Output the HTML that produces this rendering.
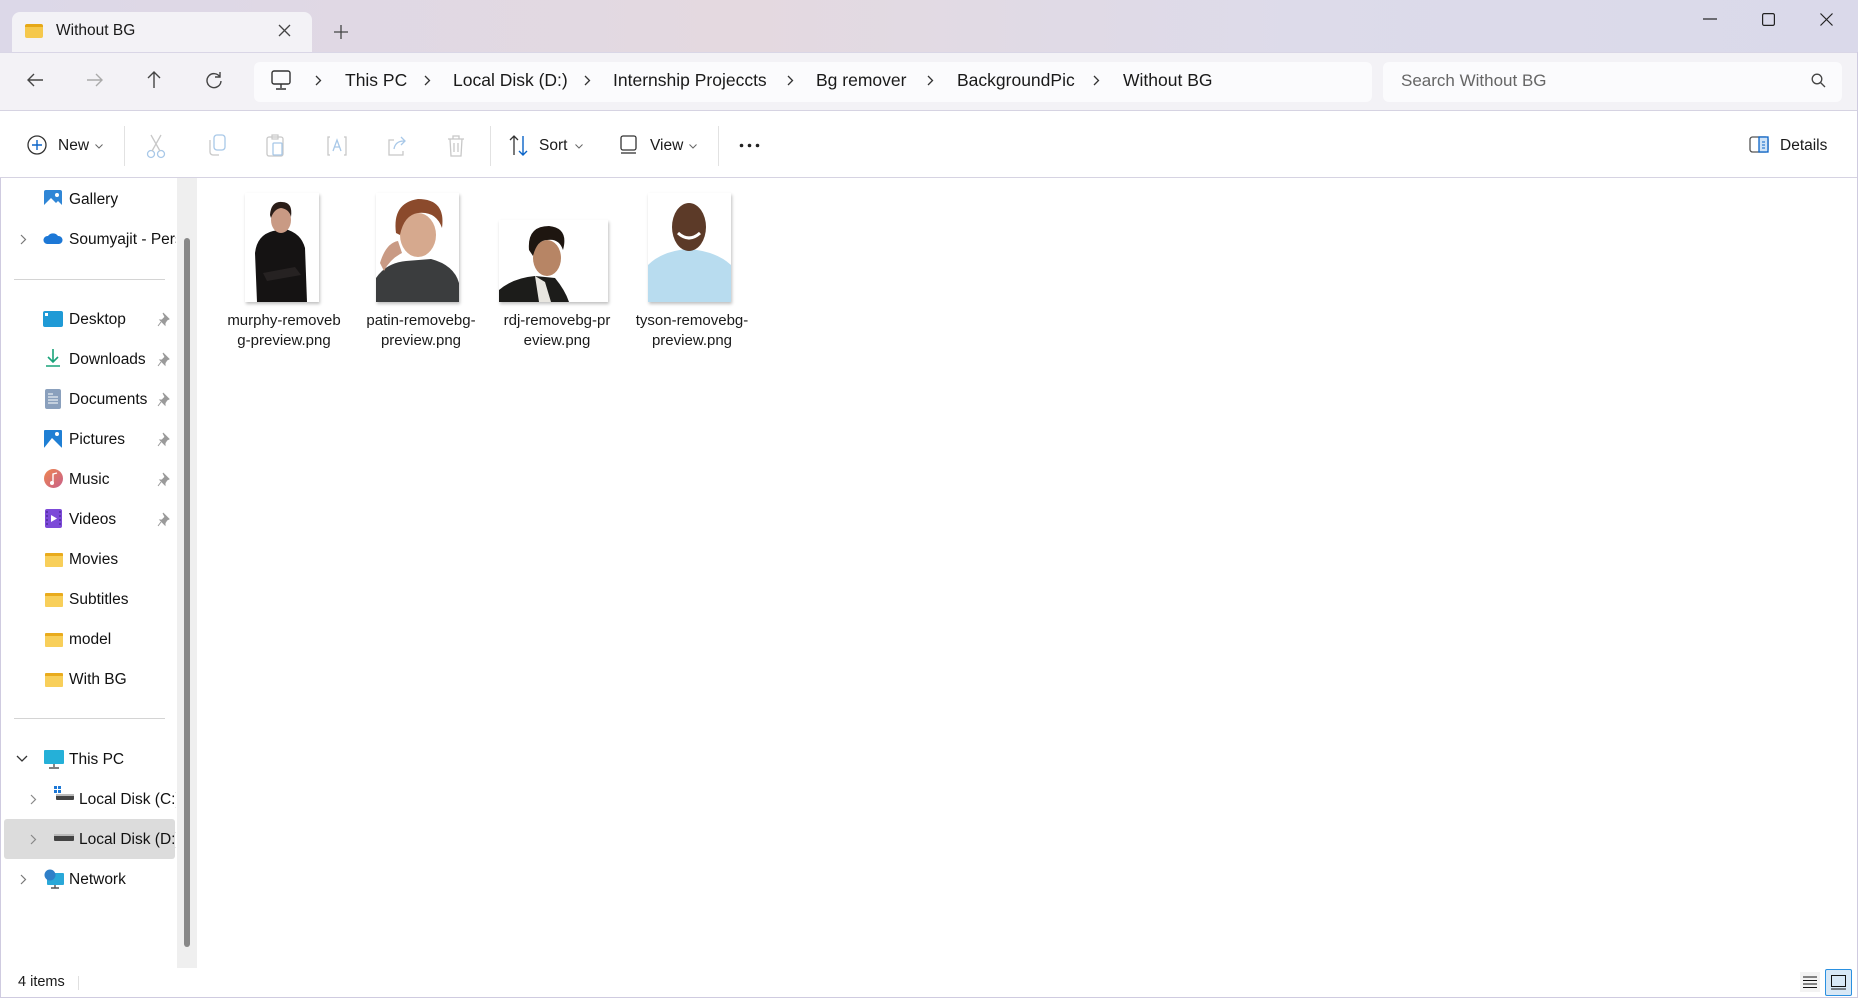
<!DOCTYPE html>
<html><head><meta charset="utf-8"><style>
*{margin:0;padding:0;box-sizing:border-box}
body{width:1858px;height:998px;overflow:hidden;font-family:"Segoe UI","Liberation Sans",sans-serif;color:#1a1a1a;background:#fff;position:relative}
.a{position:absolute}
.t{position:absolute;white-space:nowrap}
.title{left:0;top:0;width:1858px;height:52px;background:linear-gradient(90deg,#dcd8e8 0%,#e4d9e0 40%,#dddbea 70%,#dad9ea 100%)}
.addr{left:0;top:52px;width:1858px;height:58px;background:#f3f2f6;border-top:1px solid #d9d6e6}
.tb{left:0;top:110px;width:1858px;height:68px;background:#fff;border-top:1px solid #d6d3e2;border-bottom:1px solid #d6d3e2}
.side .t{font-size:15.5px;color:#111}
.lbl{position:absolute;width:140px;text-align:center;font-size:15px;line-height:20px;color:#1a1a1a}
.bc{font-size:17.5px;color:#1a1a1a}
.ch{font-size:15px}
</style></head><body>
<div class="a title"></div>
<div class="a" style="left:12px;top:12px;width:300px;height:41px;background:#f3f2f6;border-radius:8px 8px 0 0"></div>
<div class="a" style="left:25px;top:24px;width:18px;height:14px;background:#f5c84c;border-radius:2px;border-top:3px solid #e6a817"></div>
<div class="t" style="left:56px;top:22px;font-size:15.5px">Without BG</div>
<svg class="a" style="left:278px;top:24px" width="13" height="13"><path d="M1 1L12 12M12 1L1 12" stroke="#444" stroke-width="1.3"/></svg>
<svg class="a" style="left:334px;top:25px" width="14" height="14"><path d="M7 0V14M0 7H14" stroke="#444" stroke-width="1.3"/></svg>
<svg class="a" style="left:1703px;top:18px" width="14" height="2"><path d="M0 1H14" stroke="#222" stroke-width="1.2"/></svg>
<svg class="a" style="left:1762px;top:13px" width="13" height="13"><rect x="0.6" y="0.6" width="11.8" height="11.8" rx="1.5" fill="none" stroke="#222" stroke-width="1.2"/></svg>
<svg class="a" style="left:1820px;top:13px" width="13" height="13"><path d="M0.5 0.5L12.5 12.5M12.5 0.5L0.5 12.5" stroke="#222" stroke-width="1.2"/></svg>

<div class="a addr"></div>
<svg class="a" style="left:26px;top:71px" width="18" height="18"><path d="M17 9H2M8 3L2 9L8 15" fill="none" stroke="#444" stroke-width="1.4"/></svg>
<svg class="a" style="left:86px;top:71px" width="18" height="18"><path d="M1 9H16M10 3L16 9L10 15" fill="none" stroke="#aaa" stroke-width="1.4"/></svg>
<svg class="a" style="left:145px;top:70px" width="18" height="19"><path d="M9 18V2M3 8L9 2L15 8" fill="none" stroke="#444" stroke-width="1.4"/></svg>
<svg class="a" style="left:205px;top:71px" width="18" height="18"><path d="M15 6A7 7 0 1 0 16 10M15 1V6H10" fill="none" stroke="#444" stroke-width="1.4"/></svg>
<div class="a" style="left:254px;top:62px;width:1118px;height:40px;background:#fbfbfd;border-radius:6px"></div>
<svg class="a" style="left:271px;top:70px" width="20" height="22"><rect x="1" y="1" width="18" height="13" rx="2" fill="none" stroke="#333" stroke-width="1.4"/><path d="M10 14V18M5 19H15" stroke="#333" stroke-width="1.4"/></svg>
<div class="bc">
<svg class="a" style="left:315px;top:75px" width="7" height="11"><path d="M1 1L5.5 5.5L1 10" fill="none" stroke="#333" stroke-width="1.3"/></svg>
<div class="t" style="left:345px;top:70px">This PC</div>
<svg class="a" style="left:424px;top:75px" width="7" height="11"><path d="M1 1L5.5 5.5L1 10" fill="none" stroke="#333" stroke-width="1.3"/></svg>
<div class="t" style="left:453px;top:70px">Local Disk (D:)</div>
<svg class="a" style="left:584px;top:75px" width="7" height="11"><path d="M1 1L5.5 5.5L1 10" fill="none" stroke="#333" stroke-width="1.3"/></svg>
<div class="t" style="left:613px;top:70px">Internship Projeccts</div>
<svg class="a" style="left:787px;top:75px" width="7" height="11"><path d="M1 1L5.5 5.5L1 10" fill="none" stroke="#333" stroke-width="1.3"/></svg>
<div class="t" style="left:816px;top:70px">Bg remover</div>
<svg class="a" style="left:927px;top:75px" width="7" height="11"><path d="M1 1L5.5 5.5L1 10" fill="none" stroke="#333" stroke-width="1.3"/></svg>
<div class="t" style="left:957px;top:70px">BackgroundPic</div>
<svg class="a" style="left:1093px;top:75px" width="7" height="11"><path d="M1 1L5.5 5.5L1 10" fill="none" stroke="#333" stroke-width="1.3"/></svg>
<div class="t" style="left:1123px;top:70px">Without BG</div>
</div>
<div class="a" style="left:1383px;top:62px;width:459px;height:40px;background:#fbfbfd;border-radius:6px"></div>
<div class="t" style="left:1401px;top:71px;font-size:17px;color:#666">Search Without BG</div>
<svg class="a" style="left:1811px;top:73px" width="15" height="15"><circle cx="6" cy="6" r="4.8" fill="none" stroke="#444" stroke-width="1.3"/><path d="M9.5 9.5L14 14" stroke="#444" stroke-width="1.3"/></svg>

<div class="a tb"></div>
<svg class="a" style="left:27px;top:135px" width="20" height="20"><circle cx="10" cy="10" r="9" fill="none" stroke="#333" stroke-width="1.3"/><path d="M10 5V15M5 10H15" stroke="#0a64c8" stroke-width="1.4"/></svg>
<div class="t" style="left:58px;top:137px;font-size:15.5px">New</div>
<svg class="a" style="left:95px;top:144px" width="8" height="5"><path d="M0.5 0.5L4 4L7.5 0.5" fill="none" stroke="#666"/></svg>
<div class="a" style="left:124px;top:126px;width:1px;height:40px;background:#e2e2e2"></div>
<svg class="a" style="left:146px;top:133px" width="20" height="26"><circle cx="5" cy="21" r="3.5" fill="none" stroke="#a8c8e8" stroke-width="1.3"/><circle cx="15" cy="21" r="3.5" fill="none" stroke="#a8c8e8" stroke-width="1.3"/><path d="M6 18L15 2M14 18L5 2" stroke="#c8c8c8" stroke-width="1.3"/></svg>
<svg class="a" style="left:207px;top:134px" width="20" height="24"><rect x="7" y="1" width="11" height="15" rx="3" fill="none" stroke="#a8c8e8" stroke-width="1.3"/><path d="M3 6V18a3 3 0 0 0 3 3H12" fill="none" stroke="#c8c8c8" stroke-width="1.3"/></svg>
<svg class="a" style="left:266px;top:134px" width="20" height="24"><rect x="1" y="3" width="16" height="19" rx="2" fill="none" stroke="#c8c8c8" stroke-width="1.3"/><rect x="6" y="1" width="6" height="4" fill="none" stroke="#c8c8c8" stroke-width="1.2"/><rect x="7" y="9" width="9" height="12" rx="1" fill="none" stroke="#a8c8e8" stroke-width="1.3"/></svg>
<svg class="a" style="left:326px;top:134px" width="22" height="24"><path d="M4 3H2V21H4M18 3H20V21H18" fill="none" stroke="#c8c8c8" stroke-width="1.3"/><path d="M7 17L11 6L15 17M8.5 13H13.5" fill="none" stroke="#a8c8e8" stroke-width="1.3"/></svg>
<svg class="a" style="left:386px;top:134px" width="22" height="24"><path d="M8 6H3V21H17V17" fill="none" stroke="#c8c8c8" stroke-width="1.3"/><path d="M8 15C9 9 13 7 18 7M15 3L19 7L15 11" fill="none" stroke="#a8c8e8" stroke-width="1.3"/></svg>
<svg class="a" style="left:446px;top:134px" width="20" height="24"><path d="M2 5H18M7 5V2H13V5M4 5L5 22H15L16 5M8 9V18M12 9V18" fill="none" stroke="#c8c8c8" stroke-width="1.3"/></svg>
<div class="a" style="left:490px;top:126px;width:1px;height:40px;background:#e2e2e2"></div>
<svg class="a" style="left:508px;top:134px" width="22" height="24"><path d="M6 21V2M2 6L6 2L10 6" fill="none" stroke="#333" stroke-width="1.3"/><path d="M15 2V21M11 17L15 21L19 17" fill="none" stroke="#0a64c8" stroke-width="1.4"/></svg>
<div class="t" style="left:539px;top:137px;font-size:15.5px">Sort</div>
<svg class="a" style="left:575px;top:144px" width="8" height="5"><path d="M0.5 0.5L4 4L7.5 0.5" fill="none" stroke="#666"/></svg>
<svg class="a" style="left:619px;top:135px" width="20" height="20"><rect x="2" y="1" width="15" height="14" rx="2" fill="none" stroke="#333" stroke-width="1.3"/><path d="M2 18H17" stroke="#333" stroke-width="1.3"/></svg>
<div class="t" style="left:650px;top:137px;font-size:15.5px">View</div>
<svg class="a" style="left:689px;top:144px" width="8" height="5"><path d="M0.5 0.5L4 4L7.5 0.5" fill="none" stroke="#666"/></svg>
<div class="a" style="left:718px;top:126px;width:1px;height:40px;background:#e2e2e2"></div>
<svg class="a" style="left:739px;top:143px" width="22" height="5"><circle cx="2.5" cy="2.5" r="1.8" fill="#222"/><circle cx="10.5" cy="2.5" r="1.8" fill="#222"/><circle cx="18.5" cy="2.5" r="1.8" fill="#222"/></svg>
<svg class="a" style="left:1749px;top:136px" width="20" height="18"><rect x="1" y="1" width="18" height="15" rx="2.5" fill="none" stroke="#555" stroke-width="1.3"/><rect x="10" y="1" width="9" height="15" fill="#cfe3f7" stroke="#0a64c8" stroke-width="1.3"/><path d="M13 6H16M13 9H16M13 12H16" stroke="#0a64c8"/></svg>
<div class="t" style="left:1780px;top:137px;font-size:15.5px">Details</div>

<div class="a" style="left:0;top:178px;width:1px;height:820px;background:#cfcbe0"></div>
<div class="a" style="right:0;top:52px;width:1px;height:946px;background:#cfcbe0"></div>
<div class="a" style="left:0;bottom:0;width:1858px;height:1px;background:#cfcbe0"></div>

<div class="a" style="left:177px;top:178px;width:20px;height:790px;background:#efefef"></div>
<div class="a" style="left:184px;top:238px;width:6px;height:709px;background:#888;border-radius:3px"></div>
<div class="a" style="left:4px;top:819px;width:171px;height:40px;background:#dcdcdc;border-radius:3px"></div>
<div class="side" style="position:absolute;left:0;top:0;width:176px;height:998px;overflow:hidden">
<svg class="a" style="left:43px;top:189px" width="20" height="20"><rect x="1" y="1" width="18" height="17" rx="2" fill="#2f86d6"/><path d="M1 16L8 9L13 14L15 12L19 16V18H1Z" fill="#fff"/><circle cx="14" cy="6" r="2" fill="#fff"/></svg>
<div class="t" style="left:69px;top:191px">Gallery</div>
<svg class="a" style="left:20px;top:234px" width="7" height="11"><path d="M1 1L5.5 5.5L1 10" fill="none" stroke="#777" stroke-width="1.2"/></svg>
<svg class="a" style="left:43px;top:231px" width="20" height="14"><path d="M4 13A4 4 0 0 1 5 5A6 6 0 0 1 15 5A4 4 0 0 1 16 13Z" fill="#1d78d6"/></svg>
<div class="t" style="left:69px;top:231px">Soumyajit - Pers</div>
<div class="a" style="left:14px;top:279px;width:151px;height:1px;background:#d4d4d4"></div>
<svg class="a" style="left:43px;top:311px" width="20" height="16"><rect x="0" y="0" width="20" height="16" rx="2" fill="#1f9ad6"/><rect x="2" y="2" width="3" height="3" fill="#fff"/></svg>
<div class="t" style="left:69px;top:311px">Desktop</div>
<svg class="a" style="left:45px;top:348px" width="16" height="20"><path d="M8 1V14M3 9L8 14L13 9M1 18H15" fill="none" stroke="#1aa37a" stroke-width="1.6"/></svg>
<div class="t" style="left:69px;top:351px">Downloads</div>
<svg class="a" style="left:45px;top:389px" width="16" height="20"><rect x="0" y="0" width="16" height="20" rx="2" fill="#8aa0bd"/><path d="M3 5H8M3 8H13M3 11H13M3 14H13" stroke="#fff"/></svg>
<div class="t" style="left:69px;top:391px">Documents</div>
<svg class="a" style="left:43px;top:429px" width="20" height="20"><rect x="1" y="1" width="18" height="18" rx="1" fill="#1f7fd4"/><path d="M1 19L9 9L19 19Z" fill="#fff"/><circle cx="14" cy="5" r="2" fill="#fff"/></svg>
<div class="t" style="left:69px;top:431px">Pictures</div>
<div class="a" style="left:44px;top:469px;width:19px;height:19px;border-radius:50%;background:linear-gradient(135deg,#ee8650,#c8608a)"></div>
<svg class="a" style="left:49px;top:472px" width="10" height="13"><path d="M4 11V2L8 1" fill="none" stroke="#fff" stroke-width="1.4"/><circle cx="3" cy="11" r="2" fill="#fff"/></svg>
<div class="t" style="left:69px;top:471px">Music</div>
<svg class="a" style="left:45px;top:509px" width="17" height="19"><rect x="0" y="0" width="17" height="19" rx="2" fill="#7c4ad8"/><path d="M6 6L12 9.5L6 13Z" fill="#fff"/><path d="M2 2V17M15 2V17" stroke="#3a1e80" stroke-dasharray="2 2"/></svg>
<div class="t" style="left:69px;top:511px">Videos</div>
<div class="t" style="left:69px;top:551px">Movies</div>
<div class="t" style="left:69px;top:591px">Subtitles</div>
<div class="t" style="left:69px;top:631px">model</div>
<div class="t" style="left:69px;top:671px">With BG</div>
<div class="a" style="left:45px;top:553px;width:18px;height:14px;background:#f8cf5a;border-top:3px solid #e9ab1d;border-radius:1px"></div>
<div class="a" style="left:45px;top:593px;width:18px;height:14px;background:#f8cf5a;border-top:3px solid #e9ab1d;border-radius:1px"></div>
<div class="a" style="left:45px;top:633px;width:18px;height:14px;background:#f8cf5a;border-top:3px solid #e9ab1d;border-radius:1px"></div>
<div class="a" style="left:45px;top:673px;width:18px;height:14px;background:#f8cf5a;border-top:3px solid #e9ab1d;border-radius:1px"></div>
<div class="a" style="left:14px;top:718px;width:151px;height:1px;background:#d4d4d4"></div>
<svg class="a" style="left:16px;top:755px" width="12" height="8"><path d="M1 1L6 6L11 1" fill="none" stroke="#333" stroke-width="1.3"/></svg>
<svg class="a" style="left:44px;top:750px" width="20" height="19"><rect x="0" y="0" width="20" height="14" rx="1" fill="#25b0d8"/><path d="M10 14V17M5 18H15" stroke="#555" stroke-width="1.4"/></svg>
<div class="t" style="left:69px;top:751px">This PC</div>
<svg class="a" style="left:30px;top:794px" width="7" height="11"><path d="M1 1L5.5 5.5L1 10" fill="none" stroke="#888" stroke-width="1.2"/></svg>
<svg class="a" style="left:54px;top:786px" width="20" height="16"><rect x="0" y="0" width="3" height="3" fill="#1d78d6"/><rect x="4" y="0" width="3" height="3" fill="#1d78d6"/><rect x="0" y="4" width="3" height="3" fill="#1d78d6"/><rect x="4" y="4" width="3" height="3" fill="#1d78d6"/><rect x="2" y="8" width="18" height="6" rx="1" fill="#444"/><rect x="2" y="8" width="18" height="2" fill="#bbb"/></svg>
<div class="t" style="left:79px;top:791px">Local Disk (C:)</div>
<svg class="a" style="left:30px;top:834px" width="7" height="11"><path d="M1 1L5.5 5.5L1 10" fill="none" stroke="#888" stroke-width="1.2"/></svg>
<svg class="a" style="left:54px;top:834px" width="20" height="8"><rect x="0" y="0" width="20" height="7" rx="1" fill="#444"/><rect x="0" y="0" width="20" height="2" fill="#bbb"/></svg>
<div class="t" style="left:79px;top:831px">Local Disk (D:)</div>
<svg class="a" style="left:20px;top:874px" width="7" height="11"><path d="M1 1L5.5 5.5L1 10" fill="none" stroke="#777" stroke-width="1.2"/></svg>
<svg class="a" style="left:43px;top:869px" width="22" height="20"><rect x="4" y="4" width="17" height="12" rx="1" fill="#2aa8d8"/><circle cx="7" cy="6" r="5.5" fill="#2f7fc8"/><path d="M12 16V19M8 19H16" stroke="#555" stroke-width="1.4"/></svg>
<div class="t" style="left:69px;top:871px">Network</div>
</div>
<svg width="0" height="0" style="position:absolute"><defs><path id="pn" d="M6 1L12 7L10 8L8 11L8 13L3 8L5 8L8 5Z M4 10L1 14" fill="#9a9a9a" stroke="#9a9a9a"/></defs></svg>
<svg class="a" style="left:157px;top:312px" width="14" height="15"><use href="#pn"/></svg>
<svg class="a" style="left:157px;top:352px" width="14" height="15"><use href="#pn"/></svg>
<svg class="a" style="left:157px;top:392px" width="14" height="15"><use href="#pn"/></svg>
<svg class="a" style="left:157px;top:432px" width="14" height="15"><use href="#pn"/></svg>
<svg class="a" style="left:157px;top:472px" width="14" height="15"><use href="#pn"/></svg>
<svg class="a" style="left:157px;top:512px" width="14" height="15"><use href="#pn"/></svg>

<svg class="a" style="left:245px;top:193px;box-shadow:1px 2px 3px rgba(0,0,0,.25)" width="74" height="109"><rect width="74" height="109" fill="#fff"/><path d="M12 109L10 60Q12 42 28 38L40 36Q56 40 60 55L62 109Z" fill="#151313"/><ellipse cx="36" cy="27" rx="10" ry="13" fill="#c99a84"/><path d="M25 22Q26 8 37 9Q48 9 46 24Q44 16 36 15Q29 16 26 25Z" fill="#2a1d18"/><path d="M18 80L50 74L56 82L22 88Z" fill="#262222"/></svg>
<svg class="a" style="left:376px;top:193px;box-shadow:1px 2px 3px rgba(0,0,0,.25)" width="83" height="109"><rect width="83" height="109" fill="#fff"/><path d="M0 109V85Q10 70 30 68L55 66Q78 72 83 90V109Z" fill="#3b3d3e"/><ellipse cx="42" cy="42" rx="18" ry="22" fill="#d6a98e"/><path d="M20 40Q16 10 42 6Q70 6 66 35Q60 18 42 20Q28 22 24 42Z" fill="#8b4a2c"/><path d="M4 70Q10 50 22 48L26 60Q14 66 8 78Z" fill="#c99a84"/></svg>
<svg class="a" style="left:499px;top:220px;box-shadow:1px 2px 3px rgba(0,0,0,.25)" width="109" height="82"><rect width="109" height="82" fill="#fff"/><path d="M0 82V70Q14 58 36 56L56 58Q66 70 70 82Z" fill="#1c1c1a"/><path d="M36 56L46 62L52 82H40Z" fill="#e8e6e0"/><ellipse cx="48" cy="38" rx="14" ry="18" fill="#b78565"/><path d="M30 30Q28 6 50 6Q70 8 64 30Q60 18 48 20Q38 20 34 36Z" fill="#1e1610"/></svg>
<svg class="a" style="left:648px;top:193px;box-shadow:1px 2px 3px rgba(0,0,0,.25)" width="83" height="109"><rect width="83" height="109" fill="#fff"/><path d="M0 109V72Q14 58 40 56Q68 58 83 72V109Z" fill="#b8dcef"/><ellipse cx="41" cy="34" rx="17" ry="24" fill="#5c3a28"/><path d="M30 40Q41 50 52 40" stroke="#fff" stroke-width="3" fill="none"/></svg>
<div class="lbl" style="left:214px;top:311px">murphy-removeb<br>g-preview.png</div>
<div class="lbl" style="left:351px;top:311px">patin-removebg-<br>preview.png</div>
<div class="lbl" style="left:487px;top:311px">rdj-removebg-pr<br>eview.png</div>
<div class="lbl" style="left:622px;top:311px">tyson-removebg-<br>preview.png</div>

<div class="t" style="left:18px;top:974px;font-size:14.5px">4 items</div>
<div class="a" style="left:78px;top:976px;width:1px;height:14px;background:#e0e0e0"></div>
<div class="a" style="left:1800px;top:972px;width:20px;height:20px;background:#f3f3f3"></div>
<svg class="a" style="left:1803px;top:976px" width="14" height="12"><path d="M0 1H14M0 4.5H14M0 8H14M0 11.5H14" stroke="#111"/></svg>
<div class="a" style="left:1825px;top:969px;width:27px;height:27px;background:#d8e8f6;border:1px solid #2a90e0;border-radius:2px"></div>
<svg class="a" style="left:1831px;top:975px" width="15" height="15"><rect x="0.5" y="0.5" width="14" height="11" fill="none" stroke="#111"/><path d="M0 14H15" stroke="#111"/></svg>
</body></html>
